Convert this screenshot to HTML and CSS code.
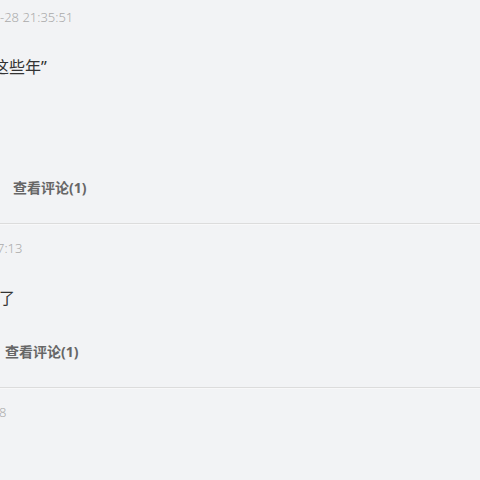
FILE: index.html
```html
<!DOCTYPE html>
<html lang="zh-CN">

<head>
    <meta charset="UTF-8">
    <meta name="viewport" content="width=device-width, initial-scale=1.0">
    <title>评论列表</title>
    <link rel="stylesheet" href="styles.css">
</head>

<body>
    <div class="list">
        <div class="item first">
            <div class="date">-28 21:35:51</div>
            <div class="content long cut-wide">这些年”</div>
            <div class="actions indent-lg"><a class="more" href="#">查看评论(1)</a></div>
        </div>
        <div class="item">
            <div class="date cut-mid">7:13</div>
            <div class="content cut-small">了</div>
            <div class="actions indent-sm"><a class="more" href="#">查看评论(1)</a></div>
        </div>
        <div class="item last">
            <div class="date cut-small">8</div>
        </div>
    </div>
</body>

</html>
```

FILE: styles.css
```css
body {
    margin: 0;
    background-color: #f2f3f5;
    font-family: "Noto Sans", "Noto Sans CJK SC", sans-serif;
    overflow: hidden;
}

.item {
    padding: 14px 0 25px;
    border-bottom: 1px solid #dcdcdc;
    box-shadow: 0 1px 0 #f8f8f9;
}

.item.first {
    padding-top: 7px;
}

.item.last {
    border-bottom: none;
    box-shadow: none;
}

.date {
    font-size: 13px;
    line-height: 20px;
    color: #aaaaaa;
    font-weight: 300;
    white-space: nowrap;
}

.content {
    margin-top: 28px;
    font-size: 16px;
    line-height: 24px;
    color: #333333;
    white-space: nowrap;
}

.content.long {
    padding-bottom: 67px;
}

.cut-wide {
    text-indent: -7px;
}

.cut-mid {
    text-indent: -3px;
}

.cut-small {
    text-indent: -1px;
}

.actions {
    margin-top: 32px;
    font-size: 14px;
    line-height: 20px;
    font-weight: bold;
}

.indent-lg {
    padding-left: 13px;
}

.indent-sm {
    padding-left: 5px;
}

.more {
    color: #666666;
    text-decoration: none;
}
```
